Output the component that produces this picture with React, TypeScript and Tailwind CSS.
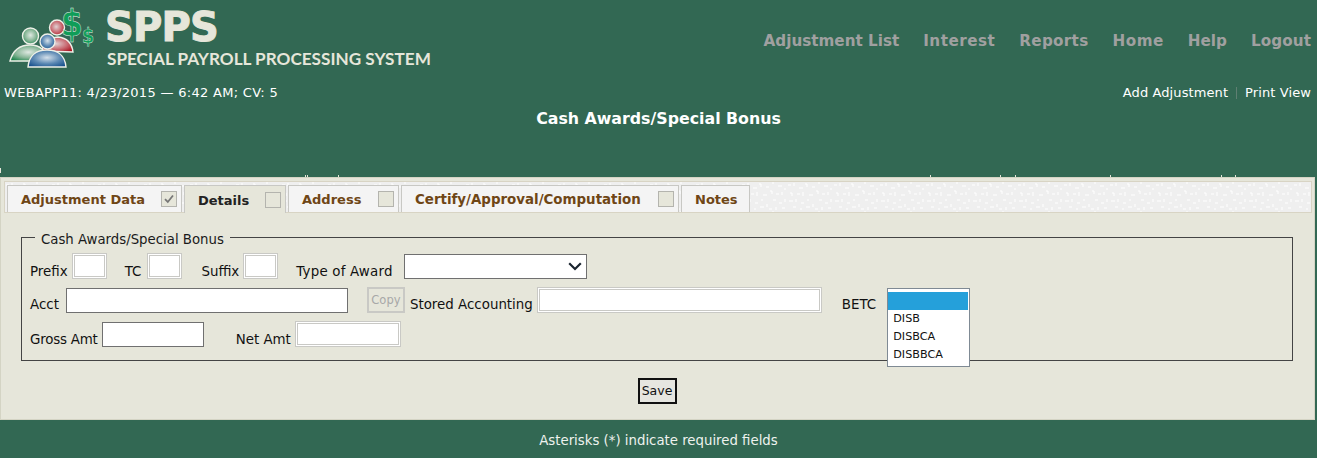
import React from "react";

const specks = [305, 307, 338, 930, 1000, 1015, 1110, 1221, 1235];

function Logo() {
  return (
    <svg width="100" height="72" viewBox="0 0 100 72" className="shrink-0">
      <defs>
        <radialGradient id="g" cx="50%" cy="45%" r="65%"><stop offset="0%" stopColor="#dfe9e2" /><stop offset="55%" stopColor="#86b596" /><stop offset="100%" stopColor="#137f45" /></radialGradient>
        <radialGradient id="r" cx="45%" cy="45%" r="65%"><stop offset="0%" stopColor="#e0d0d2" /><stop offset="55%" stopColor="#c96c74" /><stop offset="100%" stopColor="#aa1522" /></radialGradient>
        <radialGradient id="b" cx="50%" cy="45%" r="65%"><stop offset="0%" stopColor="#d4e0ea" /><stop offset="55%" stopColor="#5b88b3" /><stop offset="100%" stopColor="#164f8c" /></radialGradient>
      </defs>
      <g stroke="#eef0e8" strokeWidth="1.4">
        <path d="M42 51 C44 40 50 38 58 37 C68 38 72 44 73 52 Z" fill="url(#r)" />
        <circle cx="57" cy="27.5" r="7.5" fill="url(#r)" />
        <path d="M10 61 C13 50 20 45 30 45 C40 45 46 50 47 61 Z" fill="url(#g)" />
        <circle cx="30.5" cy="36" r="8" fill="url(#g)" />
        <path d="M28 67 C29 55 37 50 47 50 C57 50 65 55 66 67 Z" fill="url(#b)" />
        <circle cx="47.5" cy="41.5" r="7.5" fill="url(#b)" />
      </g>
      <text transform="translate(61 36) scale(0.85 1)" fill="#0f9d58" stroke="#e6efe6" strokeWidth="0.5" style={{ fontFamily: '"DejaVu Sans", sans-serif', fontWeight: 700, fontSize: 37 }}>$</text>
      <text transform="translate(82 43) scale(0.8 1)" fill="#0f9d58" stroke="#e6efe6" strokeWidth="0.4" style={{ fontFamily: '"DejaVu Sans", sans-serif', fontWeight: 700, fontSize: 22 }}>$</text>
    </svg>
  );
}

function Texture() {
  return (
    <svg className="absolute inset-0 h-full w-full" aria-hidden="true">
      <defs>
        <pattern id="tx" width="46" height="29" patternUnits="userSpaceOnUse">
          <path d="M1 3h3M7 1v3M12 6h4M18 2h2v3M25 5h3M31 1h2M37 4h4M43 7h2M3 11h2v3M10 12h3M16 10v4M22 13h4M29 9h2v3M35 12h3M41 10v3M2 19h4M9 17v3M14 21h3M20 18h2M26 22v3M32 18h3M38 21h3M44 17v3M6 25h3M13 27h2M19 25h4M28 27h3M35 25v3M41 26h3" stroke="#ffffff" strokeWidth="1" fill="none" />
        </pattern>
      </defs>
      <rect width="100%" height="100%" fill="#efefef" />
      <rect width="100%" height="100%" fill="url(#tx)" />
    </svg>
  );
}

function Tab({ label, w, active, box, checked, wide }: { label: string; w: string; active?: boolean; box?: boolean; checked?: boolean; wide?: boolean }) {
  return (
    <div className={`${w} relative flex items-center justify-between border border-b-0 border-[#c8c8c4] pl-[13px] pr-[4px] font-bold ${wide ? "text-[13.4px]" : "text-[13px]"} ${active ? "-mb-px h-[28px] bg-[#e6e6da] text-[#222222]" : "h-[27px] bg-[#f4f4f4] text-[#6f4616]"}`}>
      <span className="pt-[2px]">{label}</span>
      {box && (
        <span className="flex h-[16px] w-[16px] items-center justify-center border border-[#b4b4ae] bg-[#e6e6da]">
          {checked && (
            <svg width="12" height="12" viewBox="0 0 12 12"><path d="M2 6.2 L4.8 9 L10 2.5" fill="none" stroke="#777777" strokeWidth="1.8" /></svg>
          )}
        </span>
      )}
    </div>
  );
}

const disabledInput = "h-[26px] border-[3px] border-double border-[#c9c9c5] bg-white";
const enabledInput = "h-[25px] border border-[#707070] bg-white";

export default function App() {
  return (
    <div className="relative min-h-[458px] w-full bg-[#326853] text-[13.4px] leading-[16px] text-[#111111]" style={{ fontFamily: '"DejaVu Sans", Verdana, sans-serif' }}>
      {specks.map((x) => (
        <span key={x} className="absolute top-[175px] h-[2px] w-px bg-[#e6e6da]" style={{ left: x }} />
      ))}
      <span className="absolute left-0 top-[168px] h-[5px] w-px bg-[#e6e6da]" />
      <header className="flex h-[82px] items-start justify-between">
        <div className="flex items-start">
          <Logo />
          <div className="ml-[5px] flex flex-col text-[#e6e6da]">
            <span className="mt-[7px] h-[37px] text-[40px] font-bold leading-[40px] tracking-[-0.8px] [-webkit-text-stroke:1px_#e6e6da]">SPPS</span>
            <span className="ml-[2px] mt-[4px] whitespace-nowrap text-[17.15px] font-bold leading-[22px]" style={{ fontFamily: "Lato, sans-serif" }}>SPECIAL PAYROLL PROCESSING SYSTEM</span>
          </div>
        </div>
        <nav className="mr-[6px] mt-[31px] flex gap-[24px] text-[15.2px] font-bold leading-[20px] text-[#a0a0a0]">
          <span>Adjustment List</span>
          <span className="tracking-[0.5px]">Interest</span>
          <span className="tracking-[0.3px]">Reports</span>
          <span className="tracking-[0.5px]">Home</span>
          <span>Help</span>
          <span className="tracking-[0.1px]">Logout</span>
        </nav>
      </header>
      <div className="mt-[3px] flex h-[16px] items-center justify-between pl-[4px] pr-[6px] text-[13px] tracking-[0.1px] text-white">
        <span className="tracking-[0.3px]">WEBAPP11: 4/23/2015 — 6:42 AM; CV: 5</span>
        <span className="flex items-center">
          Add Adjustment
          <span className="mx-[8px] h-[12px] w-px bg-[#5f7f72]" />
          Print View
        </span>
      </div>
      <h1 className="mt-[8px] text-center text-[15.8px] font-bold leading-[20px] text-white">Cash Awards/Special Bonus</h1>
      <main className="mr-[2px] mt-[48px] h-[243px] border border-[#d4d4c4] bg-[#e6e6da] pl-[3px] pr-[2px] pt-[3px]">
        <div className="relative h-[32px] border border-[#d8d4c4]">
          <Texture />
          <div className="relative flex h-full items-end gap-[2px] pl-[2px]">
            <Tab label="Adjustment Data" w="w-[175px]" box checked />
            <Tab label="Details" w="w-[102px]" active box />
            <Tab label="Address" w="w-[111px]" box />
            <Tab label="Certify/Approval/Computation" w="w-[278px]" box wide />
            <Tab label="Notes" w="w-[69px]" />
          </div>
        </div>
        <fieldset className="ml-[17px] mr-[19px] mt-[15px] h-[133px] border border-[#444444] pl-[8px] pt-[6px]">
          <legend className="ml-[5px] px-[6px] pt-[4px] text-[13.3px] leading-[15px] text-[#1a1a1a]">Cash Awards/Special Bonus</legend>
          <div className="flex h-[26px] items-end">
            <span className="-mb-px">Prefix</span>
            <span className={`${disabledInput} ml-[4px] w-[35px]`} />
            <span className="-mb-px ml-[18px]">TC</span>
            <span className={`${disabledInput} ml-[6px] w-[35px]`} />
            <span className="-mb-px ml-[19px]">Suffix</span>
            <span className={`${disabledInput} ml-[4px] w-[35px]`} />
            <span className="-mb-px ml-[18px] tracking-[0.2px]">Type of Award</span>
            <span className={`${enabledInput} ml-[11px] flex w-[183px] items-center justify-end pr-[4px]`}>
              <svg width="14" height="9" viewBox="0 0 14 9"><path d="M1.2 1.2 L7 7 L12.8 1.2" fill="none" stroke="#1a2530" strokeWidth="2.2" /></svg>
            </span>
          </div>
          <div className="mt-[8px] flex h-[26px] items-end">
            <span>Acct</span>
            <span className={`${enabledInput} ml-[7px] w-[282px]`} />
            <button className="ml-[19px] h-[26px] w-[38px] border-[2px] border-[#c9c9c5] bg-[#e6e6da] text-[11.5px] text-[#a8a8a8]">Copy</button>
            <span className="ml-[5px]">Stored Accounting</span>
            <span className={`${disabledInput} ml-[4px] w-[285px]`} />
            <span className="ml-[20px]">BETC</span>
            <div className="relative ml-[11px] h-[26px] w-[83px]">
              <div className="absolute left-0 top-[1px] z-10 h-[79px] w-[83px] border border-[#7f8a94] bg-white pt-[3px] pr-[1px] text-[11.2px] leading-[18px] text-[#111111]">
                <div className="h-[18px] bg-[#25a0da]" />
                <div className="pl-[5px]">DISB</div>
                <div className="pl-[5px]">DISBCA</div>
                <div className="pl-[5px]">DISBBCA</div>
              </div>
            </div>
          </div>
          <div className="mt-[8px] flex h-[26px] items-end">
            <span className="-mb-px tracking-[-0.2px]">Gross Amt</span>
            <span className={`${enabledInput} ml-[4px] w-[102px]`} />
            <span className="-mb-px ml-[32px]">Net Amt</span>
            <span className={`${disabledInput} ml-[4px] w-[106px]`} />
          </div>
        </fieldset>
        <div className="mt-[17px] flex justify-center pr-[2px]">
          <button className="h-[26px] w-[39px] border-[2px] border-[#111111] bg-[#e6e6e0] text-[12.5px] text-[#111111]">Save</button>
        </div>
      </main>
      <footer className="flex h-[38px] items-center justify-center pt-[4px] text-[13.3px] text-[#eef2ee]">Asterisks (*) indicate required fields</footer>
    </div>
  );
}
